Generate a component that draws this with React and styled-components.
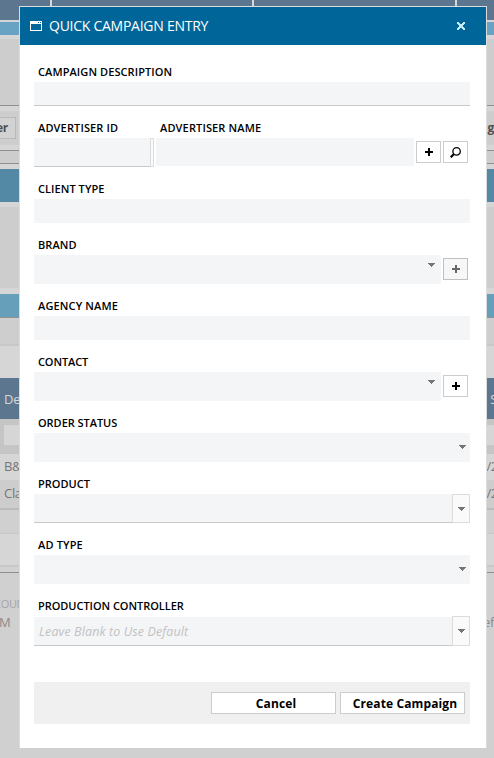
import React from 'react';
import styled, { createGlobalStyle } from 'styled-components';

const Global = createGlobalStyle`
  * { box-sizing: border-box; }
  body { margin: 0; font-family: "Open Sans", "Noto Sans", sans-serif; }
`;

const Screen = styled.div`
  position: relative;
  width: 494px;
  height: 758px;
  overflow: hidden;
  background: #d0d0d0;
`;

/* ---- dimmed page behind the dialog ---- */

const Backdrop = styled.div`
  display: flex;
  flex-direction: column;
  height: 758px;
`;

const Band = styled.div`
  flex: none;
  display: flex;
  align-items: center;
  justify-content: space-between;
  height: ${(p) => p.$h}px;
  padding-bottom: ${(p) => p.$lift || 0}px;
  background: ${(p) => p.$bg};
`;

const TabBand = styled.div`
  flex: none;
  display: grid;
  grid-template-columns: 50px 200px 201px 1fr;
  gap: 2px;
  height: 20px;
  background: #d6d6d6;
`;

const Tab = styled.div`
  background: #5d768f;
`;

const PageText = styled.span`
  flex: none;
  margin-left: ${(p) => p.$x || 0}px;
  margin-right: ${(p) => p.$r || 0}px;
  white-space: nowrap;
  font-size: ${(p) => p.$size || 13}px;
  font-weight: ${(p) => p.$weight || 400};
  line-height: 18px;
  letter-spacing: -0.3px;
  color: ${(p) => p.$color || '#757575'};
`;

const PageButton = styled.div`
  display: flex;
  align-items: center;
  justify-content: flex-end;
  width: 16px;
  height: 22px;
  padding-right: 7px;
  border: 1px solid #b9b9b9;
  border-left: 0;
  background: #d2d2d2;
`;

const PageInput = styled.div`
  width: ${(p) => p.$w}px;
  height: 20px;
  margin-left: ${(p) => p.$x}px;
  background: #d6d6d6;
`;

/* ---- dialog ---- */

const Dialog = styled.section`
  position: absolute;
  left: 19px;
  top: 6px;
  width: 468px;
  height: 742px;
  border: 1px solid #dcdcdc;
  border-bottom: 0;
  background: #fff;
`;

const Header = styled.header`
  display: flex;
  align-items: center;
  height: 38px;
  padding: 0 21px 0 10px;
  background: #006699;
  color: #fff;
`;

const Title = styled.h1`
  flex: 1;
  margin: 0 0 0 7px;
  font-size: 14px;
  font-weight: 400;
  line-height: 20px;
  letter-spacing: -0.26px;
  white-space: nowrap;
`;

const Form = styled.div`
  display: flex;
  flex-direction: column;
  gap: 12px;
  padding: 17px 16px 0 14px;
`;

const Label = styled.label`
  display: block;
  height: 20px;
  padding-left: 4px;
  font-size: 11px;
  font-weight: 600;
  line-height: 20px;
  letter-spacing: ${(p) => p.$ls || 0}px;
  white-space: nowrap;
  color: #000;
`;

const Control = styled.div`
  display: flex;
  height: ${(p) => p.$h}px;
`;

const Input = styled.div`
  flex: 1;
  height: ${(p) => (p.$h ? `${p.$h}px` : 'auto')};
  display: flex;
  justify-content: flex-end;
  align-items: flex-start;
  margin-top: ${(p) => p.$drop || 0}px;
  padding: ${(p) => (p.$top ? '8px 6px 0 0' : '12px 4px 0 0')};
  background: #f4f5f7;
  border-bottom: ${(p) => (p.$line ? '1px solid #c8c9cb' : '0')};
`;

const PromptInput = styled(Input)`
  padding: 6px 4px 0 5px;
  justify-content: flex-start;
`;

const Placeholder = styled.span`
  font-size: 12.5px;
  font-style: italic;
  font-weight: 500;
  line-height: 18px;
  letter-spacing: 0.1px;
  white-space: nowrap;
  color: #c2c2c2;
`;

const PickerSliver = styled.div`
  width: 4px;
  height: 29px;
  border: 1px solid #dcdcdc;
  background: #fafafa;
`;

const DropButton = styled.div`
  display: flex;
  align-items: flex-start;
  justify-content: center;
  width: 18px;
  padding-top: 12px;
  border: 1px solid #dcdcdc;
  background: #fafafa;
`;

const IconButton = styled.button`
  display: flex;
  align-items: center;
  justify-content: center;
  width: 25px;
  height: 22px;
  margin: 3px 0 0 2px;
  padding: 0;
  border: 1px solid ${(p) => (p.$dim ? '#c0c0c0' : '#cccccc')};
  background: ${(p) => (p.$dim ? '#f7f7f7' : '#fff')};
  color: ${(p) => (p.$dim ? '#666' : '#000')};
`;

const ButtonSpacer = styled.div`
  width: 2px;
`;

const AdvertiserGrid = styled.div`
  display: grid;
  grid-template-columns: 120px 1fr;
  column-gap: 2px;
  height: 49px;
`;

const Footer = styled.footer`
  display: flex;
  align-items: center;
  justify-content: flex-end;
  gap: 4px;
  height: 42px;
  margin: 36px 16px 0 14px;
  padding-right: 5px;
  background: #f0f0f0;
`;

const Action = styled.button`
  width: 125px;
  height: 22px;
  padding: 1px 0 0 5px;
  border: 1px solid #cccccc;
  background: #fff;
  font: 700 12px/19px "Open Sans", "Noto Sans", sans-serif;
  letter-spacing: 0.12px;
  white-space: nowrap;
  color: #000;
`;

const Arrow = () => (
  <svg width="7" height="4" viewBox="0 0 7 4" shapeRendering="crispEdges" fill="#757575">
    <path d="M0 0h7v1H0zM1 1h5v1H1zM2 2h3v1H2zM3 3h1v1H3z" />
  </svg>
);

const Plus = () => (
  <svg width="8" height="8" viewBox="0 0 8 8" shapeRendering="crispEdges" fill="currentColor">
    <path d="M3 0h2v3h3v2H5v3H3V5H0V3h3z" />
  </svg>
);

const Search = () => (
  <svg width="11" height="11" viewBox="0 0 11 11" fill="none" stroke="#000">
    <circle cx="6.6" cy="4.4" r="3.7" strokeWidth="1.3" />
    <path d="M3.7 7.3L0.7 10.3" strokeWidth="2.2" />
  </svg>
);

const WindowIcon = () => (
  <svg width="12" height="10" viewBox="0 0 12 10" shapeRendering="crispEdges">
    <path fill="#fff" fillRule="evenodd" d="M0 0h12v10H0zM1 3v6h10V3zM8 1v1h1V1zM10 1v1h1V1z" />
  </svg>
);

const Close = () => (
  <svg width="8" height="8" viewBox="0 0 8 8" shapeRendering="crispEdges" fill="#c5e8f5">
    <path d="M0 0h2v1h1v1h2V1h1V0h2v2H7v1H6v2h1v1h1v2H6V7H5V6H3v1H2v1H0V6h1V5h1V3H1V2H0z" />
  </svg>
);

const Field = ({ label, ls, h, children }) => (
  <div>
    <Label $ls={ls}>{label}</Label>
    <Control $h={h}>{children}</Control>
  </div>
);

const AddField = ({ label, ls, dim }) => (
  <Field label={label} ls={ls} h={29}>
    <Input $top><Arrow /></Input>
    <IconButton $dim={dim} aria-label="Add"><Plus /></IconButton>
    <ButtonSpacer />
  </Field>
);

export default function App() {
  return (
    <Screen>
      <Global />
      <Backdrop>
        <TabBand><Tab /><Tab /><Tab /><Tab /></TabBand>
        <Band $h={2} $bg="#d6d6d6" />
        <Band $h={13} $bg="#68a3c3" />
        <Band $h={4} $bg="#d6d6d6" />
        <Band $h={66} $bg="#cdcdcd" />
        <Band $h={1} $bg="#909090" />
        <Band $h={5} $bg="#d6d6d6" />
        <Band $h={34} $bg="#cdcdcd">
          <PageButton><PageText $size={12} $weight={700} $color="#505050">er</PageText></PageButton>
          <PageText $size={12} $weight={700} $color="#505050">g</PageText>
        </Band>
        <Band $h={5} $bg="#d6d6d6" />
        <Band $h={1} $bg="#909090" />
        <Band $h={12} $bg="#cdcdcd" />
        <Band $h={1} $bg="#909090" />
        <Band $h={5} $bg="#d6d6d6" />
        <Band $h={33} $bg="#5489a6" />
        <Band $h={5} $bg="#d6d6d6" />
        <Band $h={81} $bg="#cdcdcd" />
        <Band $h={6} $bg="#d6d6d6" />
        <Band $h={23} $bg="#669fba" />
        <Band $h={1} $bg="#909090" />
        <Band $h={26} $bg="#cecece" />
        <Band $h={2} $bg="#c8c8c8" />
        <Band $h={32} $bg="#d6d6d6" />
        <Band $h={41} $bg="#5d768f">
          <PageText $x={4} $color="#d6d6d6">De</PageText>
          <PageText $r={-3} $color="#d6d6d6">e S</PageText>
        </Band>
        <Band $h={35} $lift={3} $bg="#c5c5c5">
          <PageInput $w={15} $x={4} />
          <PageInput $w={7} $x={0} />
        </Band>
        <Band $h={26} $lift={2} $bg="#d6d6d6">
          <PageText $x={4}>B&amp;</PageText>
          <PageText $r={-4}>/2</PageText>
        </Band>
        <Band $h={28} $lift={2} $bg="#cdcdcd">
          <PageText $x={4}>Cla</PageText>
          <PageText $r={-4}>/2</PageText>
        </Band>
        <Band $h={2} $bg="#bcbcbc" />
        <Band $h={23} $bg="#d0d0d0" />
        <Band $h={1} $bg="#c6c6c6" />
        <Band $h={31} $bg="#d6d6d6" />
        <Band $h={2} $bg="#c8c8c8" />
        <Band $h={5} $bg="#d2d2d2" />
        <Band $h={1} $bg="#909090" />
        <Band $h={22} $bg="#d0d0d0" />
        <Band $h={18} $bg="#d0d0d0">
          <PageText $x={-6} $size={11} $color="#a5a5a5">COUN</PageText>
        </Band>
        <Band $h={18} $bg="#d0d0d0">
          <PageText $x={-1} $color="#8a8a8a">M</PageText>
          <PageText $color="#8a8a8a">ef</PageText>
        </Band>
      </Backdrop>

      <Dialog>
        <Header>
          <WindowIcon />
          <Title>QUICK CAMPAIGN ENTRY</Title>
          <Close />
        </Header>
        <Form>
          <Field label="CAMPAIGN DESCRIPTION" ls={0.09} h={24}><Input $line /></Field>
          <AdvertiserGrid>
            <Field label="ADVERTISER ID" ls={0.14} h={29}>
              <Input $line />
              <PickerSliver />
            </Field>
            <Field label="ADVERTISER NAME" ls={0.14} h={29}>
              <Input $h={28} />
              <IconButton aria-label="Add"><Plus /></IconButton>
              <IconButton aria-label="Search"><Search /></IconButton>
              <ButtonSpacer />
            </Field>
          </AdvertiserGrid>
          <Field label="CLIENT TYPE" ls={0.07} h={24}><Input /></Field>
          <AddField label="BRAND" ls={0.1} dim />
          <Field label="AGENCY NAME" ls={0.13} h={24}><Input /></Field>
          <AddField label="CONTACT" ls={-0.1} />
          <Field label="ORDER STATUS" ls={-0.04} h={29}><Input><Arrow /></Input></Field>
          <Field label="PRODUCT" h={29}>
            <Input $line />
            <DropButton><Arrow /></DropButton>
          </Field>
          <Field label="AD TYPE" ls={0.15} h={29}><Input><Arrow /></Input></Field>
          <Field label="PRODUCTION CONTROLLER" ls={-0.04} h={30}>
            <PromptInput $line $drop={1}><Placeholder>Leave Blank to Use Default</Placeholder></PromptInput>
            <DropButton><Arrow /></DropButton>
          </Field>
        </Form>
        <Footer>
          <Action>Cancel</Action>
          <Action>Create Campaign</Action>
        </Footer>
      </Dialog>
    </Screen>
  );
}
